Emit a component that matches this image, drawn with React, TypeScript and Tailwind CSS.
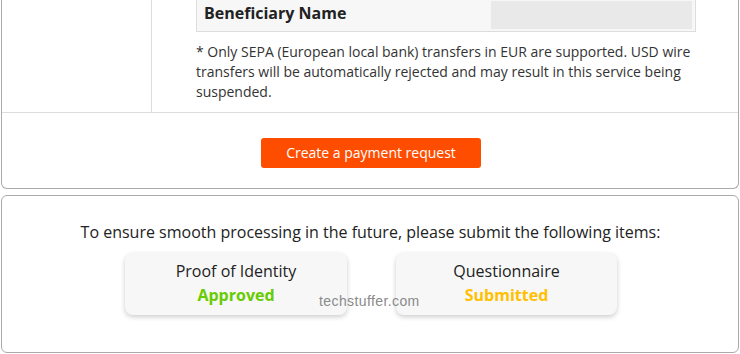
import React from "react";

export default function App() {
  return (
    <div className="w-[740px] h-[354px] bg-white text-[#333] overflow-hidden" style={{ fontFamily: '"Open Sans", sans-serif' }}>
      {/* Card 1 */}
      <div className="ml-[1px] w-[738px] h-[189px] border-x border-b border-[#aaa] rounded-b-[6px] flex flex-col">
        <div className="flex h-[113px] border-b border-[#ddd]">
          <div className="w-[150px] border-r border-[#ddd]" />
          <div className="flex-1 pl-[44px] pr-[42px]">
            <div className="flex h-[32px] border-x border-b border-[#ddd] bg-[#f7f7f7]">
              <div className="w-[294px] pl-[7px] flex items-center text-[16px] font-bold leading-[24px] text-[#222] pb-[6px]">
                Beneficiary Name
              </div>
              <div className="flex-1 pt-[1px] pb-[2px] pr-[3px]">
                <div className="h-full bg-[#e9e9e9]" />
              </div>
            </div>
            <p className="mt-[10px] text-[14px] leading-[20px] text-[#333]">
              * Only SEPA (European local bank) transfers in EUR are supported. USD wire transfers will be automatically rejected and may result in this service being suspended.
            </p>
          </div>
        </div>
        <div className="flex justify-center pt-[25px]">
          <button className="ml-[2px] w-[220px] h-[30px] bg-[#ff4d00] rounded-[3px] text-white text-[14px] leading-[20px]">
            Create a payment request
          </button>
        </div>
      </div>

      {/* Card 2 */}
      <div className="relative ml-[1px] mt-[6px] w-[738px] h-[158px] border border-[#aaa] rounded-[6px] flex flex-col items-center">
        <p className="mt-[24px] ml-[1px] text-[16px] leading-[24px] text-[#222]">
          To ensure smooth processing in the future, please submit the following items:
        </p>
        <div className="mt-[9px] flex gap-[49px] ml-[2px]">
          <div className="w-[222px] h-[62px] bg-[#f7f7f7] rounded-[8px] shadow-[0_2px_5px_rgba(0,0,0,0.2)] flex flex-col items-center pt-[6px]">
            <span className="text-[16px] leading-[24px] text-[#222]">Proof of Identity</span>
            <span className="text-[16px] leading-[24px] font-bold text-[#66cc00]">Approved</span>
          </div>
          <div className="w-[221px] h-[62px] bg-[#f7f7f7] rounded-[8px] shadow-[0_2px_5px_rgba(0,0,0,0.2)] flex flex-col items-center pt-[6px]">
            <span className="text-[16px] leading-[24px] text-[#222]">Questionnaire</span>
            <span className="text-[16px] leading-[24px] font-bold text-[#ffc000]">Submitted</span>
          </div>
        </div>
        <span
          className="absolute left-[317px] top-[96px] text-[14px] leading-[18px] tracking-[0.4px] text-[#8a8a8a]"
          style={{ fontFamily: '"Liberation Sans", Arial, sans-serif' }}
        >
          techstuffer.com
        </span>
      </div>
    </div>
  );
}
